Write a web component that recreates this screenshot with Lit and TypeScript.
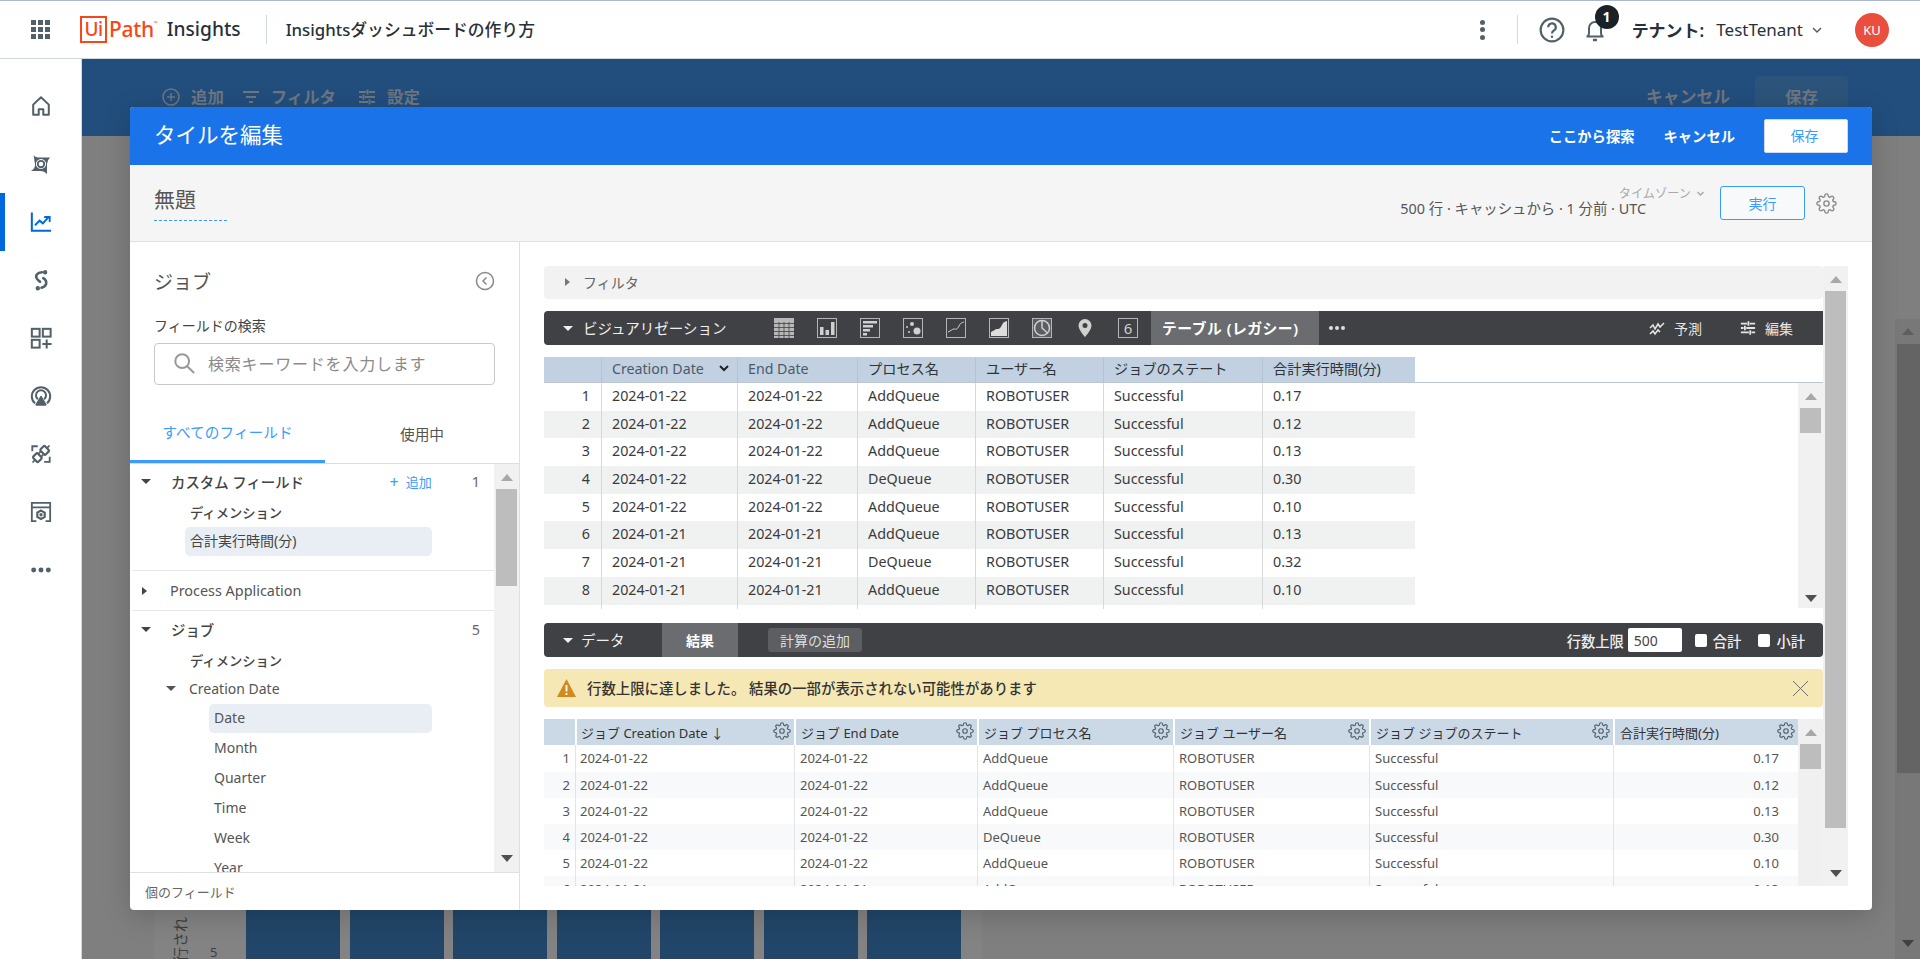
import { LitElement, html, svg, css } from "lit";
import { customElement } from "lit/decorators.js";

const GEAR = "M19.4 15a1.65 1.65 0 0 0 .33 1.82l.06.06a2 2 0 0 1 0 2.83 2 2 0 0 1-2.83 0l-.06-.06a1.65 1.65 0 0 0-1.82-.33 1.65 1.65 0 0 0-1 1.51V21a2 2 0 0 1-2 2 2 2 0 0 1-2-2v-.09A1.65 1.65 0 0 0 9 19.4a1.65 1.65 0 0 0-1.82.33l-.06.06a2 2 0 0 1-2.83 0 2 2 0 0 1 0-2.83l.06-.06a1.65 1.65 0 0 0 .33-1.82 1.65 1.65 0 0 0-1.51-1H3a2 2 0 0 1-2-2 2 2 0 0 1 2-2h.09A1.65 1.65 0 0 0 4.6 9a1.65 1.65 0 0 0-.33-1.82l-.06-.06a2 2 0 0 1 0-2.83 2 2 0 0 1 2.83 0l.06.06a1.65 1.65 0 0 0 1.82.33H9a1.65 1.65 0 0 0 1-1.51V3a2 2 0 0 1 2-2 2 2 0 0 1 2 2v.09a1.65 1.65 0 0 0 1 1.51 1.65 1.65 0 0 0 1.82-.33l.06-.06a2 2 0 0 1 2.83 0 2 2 0 0 1 0 2.83l-.06.06a1.65 1.65 0 0 0-.33 1.82V9a1.65 1.65 0 0 0 1.51 1H21a2 2 0 0 1 2 2 2 2 0 0 1-2 2h-.09a1.65 1.65 0 0 0-1.51 1z";

const gearIcon = (cls: string) => html`<svg class=${cls} viewBox="0 0 24 24" fill="none" stroke="currentColor" stroke-width="1.6"><circle cx="12" cy="12" r="3"></circle><path d=${GEAR}></path></svg>`;
const sliders = (cls: string) => html`<svg class=${cls} viewBox="0 0 18 18" fill="none" stroke="currentColor" stroke-width="2"><path d="M1 4h7M11 4h6M1 9h3M7 9h10M1 14h9M13 14h4M9.500 1.500v5M5.500 6.500v5M11.500 11.500v5"></path></svg>`;
const arrowDown = html`<i class="tri down"></i>`;
const arrowRight = html`<i class="tri right"></i>`;

const SIDE = [
  html`<svg viewBox="0 0 24 24" fill="none" stroke="currentColor" stroke-width="2.200"><path d="M3.500 21.500V10.500L12 2.500l8.500 8v11h-6v-6h-5v6z" stroke-linejoin="round"></path></svg>`,
  html`<svg viewBox="0 0 24 24"><path fill="currentColor" fill-rule="evenodd" d="M4 2.500Q6 5 9 5H22Q18.500 8 18.500 12V23Q15.500 19.500 12 19.500H1Q5.500 17 5.500 13ZM12 6.500a5.500 5.500 0 1 0 .01 0Z"></path><circle cx="12" cy="12" r="3.500" fill="none" stroke="currentColor" stroke-width="2"></circle></svg>`,
  html`<svg viewBox="0 0 24 24" fill="none" stroke="currentColor" stroke-width="2.200"><path d="M2 1.500V21.500H23"></path><path d="M5.500 15.500L10.500 10.500l3.500 3 6-6.500"></path><path d="M15.500 6.500h6v5.500" stroke-width="2"></path></svg>`,
  html`<svg viewBox="0 0 24 24" fill="none" stroke="currentColor" stroke-width="2.800" stroke-linecap="round"><path d="M13 3.500C8 3.500 5.500 7 7.500 10.500c1 1.500 2.500 2.500 3.500 3.500"></path><path d="M14.500 10c1.500 1 4 3 3 6.500C16.800 19 14.500 20 12.500 20.500"></path><circle cx="16.500" cy="3.500" r="1" fill="currentColor"></circle><circle cx="8.500" cy="21" r="1" fill="currentColor"></circle></svg>`,
  html`<svg viewBox="0 0 24 24" fill="none" stroke="currentColor" stroke-width="2.200"><rect x="2" y="2" width="8.500" height="8.500"></rect><rect x="14" y="2" width="8.500" height="8.500"></rect><rect x="2" y="14" width="8.500" height="8.500"></rect><path d="M18.200 13.500v10M13.500 18.500h10"></path></svg>`,
  html`<svg viewBox="0 0 24 24" fill="none" stroke="currentColor" stroke-width="2.200"><path d="M5.500 20a10 10 0 1 1 13 0"></path><path d="M8.500 15.500a5.500 5.500 0 1 1 7 0"></path><path d="M12 13l5 8.500H7z" fill="currentColor" stroke-linejoin="round"></path></svg>`,
  html`<svg viewBox="0 0 24 24" fill="none" stroke="currentColor" stroke-width="2"><path d="M2.500 9V3.500h6M21.500 15v5.500h-6"></path><g transform="rotate(45 8 16)"><rect x="4" y="12.500" width="8" height="7" rx="1.500" stroke-width="2.400"></rect><path d="M8 19.500v4M5.800 12.500V9.800M10.200 12.500V9.800" stroke-width="1.800"></path></g><g transform="rotate(45 16 8)"><rect x="12" y="4.500" width="8" height="7" rx="1.500" stroke-width="2.400"></rect><path d="M16 4.500V.5M13.800 11.500v2.700M18.200 11.500v2.700" stroke-width="1.800"></path></g></svg>`,
  html`<svg viewBox="0 0 24 24" fill="none" stroke="currentColor" stroke-width="2"><path d="M7 22H2V2h20v20h-5M2 7h20"></path><path d="M12 10.500l4 2.200v4.600l-4 2.200-4-2.200v-4.600z" stroke-width="2.400"></path><circle cx="12" cy="15" r=".8" fill="currentColor"></circle></svg>`,
  html`<svg viewBox="0 0 24 24" fill="currentColor"><circle cx="4" cy="12" r="2.700"></circle><circle cx="12" cy="12" r="2.700"></circle><circle cx="20" cy="12" r="2.700"></circle></svg>`,
];

const frame = svg`<rect x=".5" y=".5" width="19" height="19" fill="none" stroke="#b5b5b5"></rect>`;
const VIZ = [
  svg`<svg viewBox="0 0 20 20"><rect width="20" height="20" fill="#b8b8b8"></rect><path d="M0 5.500h20M0 9.500h20M0 13.500h20M0 17.500h20M5 4v16M10 4v16M15 4v16" stroke="#56575a" stroke-width="1"></path></svg>`,
  svg`<svg viewBox="0 0 20 20">${frame}<path d="M3 9h3.500v8H3zM8.500 12H12v5H8.500zM14 4h3.500v13H14z" fill="#d0d0d0"></path></svg>`,
  svg`<svg viewBox="0 0 20 20">${frame}<path d="M3 3h14v2.500H3zM3 7h10v2.500H3zM3 11h7v2.500H3zM3 15h4v2.500H3z" fill="#d0d0d0"></path></svg>`,
  svg`<svg viewBox="0 0 20 20">${frame}<g fill="#d0d0d0"><circle cx="14" cy="13" r="3.500"></circle><circle cx="9" cy="6" r="2"></circle><circle cx="4" cy="9" r="1"></circle><circle cx="6" cy="14" r="1"></circle></g></svg>`,
  svg`<svg viewBox="0 0 20 20">${frame}<path d="M2 14c3-1 4-3 6-3s3 1 5-3 3-3 5-4" fill="none" stroke="#d0d0d0"></path></svg>`,
  svg`<svg viewBox="0 0 20 20">${frame}<path d="M2 18v-4c3-1 4-3 6-3s3 0 5-4 3-3 5-4v15z" fill="#dcdcdc"></path></svg>`,
  svg`<svg viewBox="0 0 20 20"><rect x=".5" y=".5" width="19" height="19" fill="#5c5d60" stroke="#b5b5b5"></rect><circle cx="10" cy="10" r="7.500" fill="none" stroke="#d0d0d0" stroke-width="1.500"></circle><path d="M10 2.500V10l5.500 5" fill="none" stroke="#d0d0d0" stroke-width="1.500"></path></svg>`,
  svg`<svg viewBox="0 0 20 20"><path fill="#d0d0d0" fill-rule="evenodd" d="M10 1a6.500 6.500 0 0 0-6.500 6.500C3.500 12 10 19 10 19s6.500-7 6.500-11.500A6.500 6.500 0 0 0 10 1zm0 4a2.500 2.500 0 1 1 0 5 2.500 2.500 0 0 1 0-5z"></path></svg>`,
];

type Col = { t: string; w: number };
const COLS1: Col[] = [
  { t: "", w: 57 }, { t: "Creation Date", w: 136 }, { t: "End Date", w: 120 }, { t: "プロセス名", w: 118 },
  { t: "ユーザー名", w: 128 }, { t: "ジョブのステート", w: 159 }, { t: "合計実行時間(分)", w: 153 },
];
const COLS2: Col[] = [
  { t: "", w: 31 }, { t: "ジョブ Creation Date", w: 219 }, { t: "ジョブ End Date", w: 183 }, { t: "ジョブ プロセス名", w: 196 },
  { t: "ジョブ ユーザー名", w: 196 }, { t: "ジョブ ジョブのステート", w: 244 }, { t: "合計実行時間(分)", w: 185 },
];
const ROWS = [
  ["2024-01-22", "AddQueue", "0.17"], ["2024-01-22", "AddQueue", "0.12"], ["2024-01-22", "AddQueue", "0.13"],
  ["2024-01-22", "DeQueue", "0.30"], ["2024-01-22", "AddQueue", "0.10"], ["2024-01-21", "AddQueue", "0.13"],
  ["2024-01-21", "DeQueue", "0.32"], ["2024-01-21", "AddQueue", "0.10"], ["2024-01-21", "AddQueue", "0.11"],
];
const tracks = (c: Col[]) => c.map((x) => x.w + "px").join(" ");
const cells = (r: string[]) => [r[0], r[0], r[1], "ROBOTUSER", "Successful", r[2]];

const scrollbar = (cls: string, upTop: number, thumbTop: number, thumbH: number, dnBottom: number | null) => html`
  <div class="sb ${cls}">
    <i class="sb-up" style="margin-top:${upTop}px"></i>
    <i class="sb-thumb" style="margin-top:${thumbTop}px;height:${thumbH}px"></i>
    ${dnBottom === null ? "" : html`<i class="sb-dn" style="margin-bottom:${dnBottom}px"></i>`}
  </div>`;

@customElement("app-root")
export class AppRoot extends LitElement {
  static styles = css`
    :host { display: block; width: 1920px; height: 959px; position: relative; overflow: hidden;
      font-family: "Noto Sans", "Noto Sans CJK JP", sans-serif; font-size: 14px; color: #444; background: #fff; }
    * { box-sizing: border-box; }
    i { display: block; font-style: normal; }
    svg { display: block; flex: none; }

    .top { height: 59px; border-top: 1px solid #a9b8d0; border-bottom: 1px solid #cfd8dd; display: flex; align-items: center; background: #fff; padding: 0 31px; }
    .apps { width: 19px; height: 19px; display: grid; grid-template-columns: repeat(3, 5px); gap: 2px; margin-right: 30px; }
    .apps i { background: #526069; }
    .logo { display: flex; align-items: center; color: #fa4616; height: 27px; }
    .logo-box { width: 27px; height: 27px; border: 2.5px solid #fa4616; display: flex; align-items: center; justify-content: center; font-size: 19px; line-height: 1; letter-spacing: -.5px; font-weight: 500; }
    .logo-path { font-size: 21px; margin-left: 2px; line-height: 1; font-weight: 500; letter-spacing: -.3px; }
    .logo-tm { font-size: 5px; align-self: flex-start; margin-top: 4px; }
    .product { font-size: 19.200px; font-weight: 500; color: #273139; margin-left: 9px; padding-bottom: 2px; }
    .t-div { width: 1px; height: 29px; background: #cfd8dd; margin: 0 19px 0 25px; }
    .page-title { font-size: 16.800px; font-weight: 500; color: #273139; padding-bottom: 2px; }
    .top-right { margin-left: auto; display: flex; align-items: center; color: #526069; }
    .kebab { width: 6px; height: 20px; display: flex; flex-direction: column; justify-content: space-between; align-items: center; }
    .kebab i { width: 5px; height: 5px; border-radius: 50%; background: #526069; }
    .t-div2 { width: 1px; height: 29px; background: #d5dcdf; margin: 0 21px 0 31px; }
    .help { width: 26px; height: 26px; }
    .bell-wrap { position: relative; width: 24px; height: 24px; margin-left: 18px; }
    .bell { width: 24px; height: 24px; }
    .badge { position: absolute; left: 12px; top: -13px; width: 24px; height: 24px; border-radius: 50%; background: #1a2228; color: #fff; font-size: 14px; font-weight: 700; display: flex; align-items: center; justify-content: center; }
    .tenant-l { font-size: 17px; font-weight: 600; color: #273139; margin-left: 25px; }
    .tenant-v { font-size: 17px; color: #273139; margin-left: 12px; }
    .chev { width: 12px; height: 12px; margin-left: 8px; color: #526069; }
    .avatar { width: 34px; height: 34px; border-radius: 50%; background: #ea4f3d; color: #fff; font-size: 13px; display: flex; align-items: center; justify-content: center; margin-left: 32px; margin-right: 0; }

    .body { display: flex; height: 900px; }
    .side { width: 82px; border-right: 1px solid #cfd8dd; padding-top: 18px; background: #fff; flex: none; }
    .side-item { height: 58px; display: flex; align-items: center; justify-content: center; color: #526069; border-left: 5px solid transparent; padding-right: 4px; }
    .side-item svg { width: 22px; height: 22px; }
    .side-item.active { border-left-color: #0067df; color: #0067df; }

    .main { flex: 1; display: flex; flex-direction: column; background: #7f7f7f; min-width: 0; }
    .band { height: 77px; background: #224e7d; display: flex; align-items: center; padding: 0 72px 0 80px; color: #6e7680; font-size: 16.400px; font-weight: 600; flex: none; }
    .band svg { width: 18px; height: 18px; margin-bottom: 2px; }
    .band span { margin-left: 11px; padding-bottom: 4px; }
    .band .b2 { margin-left: 18px; }
    .band .b3 { margin-left: 22px; }
    .band .cancel { margin-left: auto; font-size: 16.800px; }
    .band .save { margin-left: 25px; width: 93px; height: 43px; border-radius: 4px; background: #2c5379; display: flex; align-items: center; justify-content: center; }
    .lower { flex: 1; display: flex; min-height: 0; }
    .canvas { flex: 1; display: flex; align-items: flex-end; padding-left: 72px; min-width: 0; overflow: hidden; }
    .tile { width: 828px; height: 90px; background: #838383; display: flex; align-items: flex-end; padding-left: 19px; color: #444; overflow: hidden; }
    .axis { writing-mode: vertical-rl; text-orientation: sideways; transform: rotate(180deg); font-size: 15px; line-height: 15px; margin-bottom: -3px; color: #3f3f3f; white-space: nowrap; }
    .tick { font-size: 13px; margin-left: 22px; line-height: 14px; color: #3f3f3f; }
    .bars { display: flex; gap: 9.500px; margin-left: 29px; }
    .bars i { width: 94px; height: 49px; background: #224669; }
    .sb.page-sb { width: 25px; margin-top: 183px; background: #787878; flex: none; }
    .page-sb .sb-up { border-bottom-color: #5e5e5e; }
    .page-sb .sb-thumb { background: #646464; width: 23px; margin-left: 2px; }
    .page-sb .sb-dn { border-top-color: #404040; }

    .sb { display: flex; flex-direction: column; align-items: center; flex: none; width: 25px; background: #f1f1f1; }
    .sb-up { width: 0; height: 0; border: 6px solid transparent; border-top: 0; border-bottom: 7px solid #a8a8a8; flex: none; }
    .sb-thumb { width: 21px; background: #bdbdbd; flex: none; }
    .sb-dn { width: 0; height: 0; border: 6px solid transparent; border-bottom: 0; border-top: 7px solid #505050; margin-top: auto; flex: none; }

    .modal { position: absolute; left: 130px; top: 107px; width: 1742px; height: 803px; background: #fff; border-radius: 4px; box-shadow: 0 6px 28px rgba(0,0,0,.18); display: flex; flex-direction: column; overflow: hidden; }
    .m-head { height: 58px; background: #1a73e8; color: #fff; display: flex; align-items: center; padding: 0 24px; flex: none; }
    .m-title { font-size: 21.500px; padding-bottom: 5px; }
    .m-link { font-weight: 600; font-size: 14.300px; padding-bottom: 2px; }
    .m-link.a { margin-left: auto; }
    .m-link.b { margin-left: 29px; }
    .m-save { margin-left: 29px; width: 84px; height: 34px; background: #fff; border: 1px solid #d0dcec; border-radius: 2px; color: #3b9bff; display: flex; align-items: center; justify-content: center; padding: 0 3px 2px 0; }
    .m-sub { height: 77px; background: #f5f5f5; border-bottom: 1px solid #e0e0e0; display: flex; align-items: center; padding: 0 35px 0 24px; flex: none; }
    .m-name { width: 73px; font-size: 21px; color: #555; line-height: 30px; border-bottom: 1px dashed #3b9bff; padding-bottom: 6px; margin-top: -2px; }
    .m-info { margin-left: auto; display: flex; flex-direction: column; align-items: flex-end; line-height: 15px; margin-top: -5px; }
    .tz { color: #aaa; display: flex; align-items: center; gap: 5px; font-size: 12.200px; }
    .tz svg { width: 9px; height: 9px; }
    .stat { color: #555; margin-right: 59px; font-size: 14.400px; }
    .run { width: 85px; height: 34px; margin-left: 15px; border: 1px solid #3b9bff; border-radius: 3px; color: #3b9bff; display: flex; align-items: center; justify-content: center; background: #f8f9fb; }
    .m-gear { width: 21px; height: 21px; margin-left: 11px; color: #8a8a8a; }
    .m-body { flex: 1; display: flex; min-height: 0; }

    .lp { width: 390px; border-right: 1px solid #e0e0e0; display: flex; flex-direction: column; flex: none; min-height: 0; }
    .lp-head { padding: 25px 24px 0; display: flex; flex-direction: column; flex: none; }
    .lp-title { display: flex; align-items: center; justify-content: space-between; height: 28px; font-size: 19px; color: #555; }
    .lp-title svg { width: 20px; height: 20px; color: #888; }
    .lp-label { margin-top: 21px; line-height: 20px; font-size: 14px; color: #444; }
    .search { margin-top: 7px; height: 42px; border: 1px solid #c8c8c8; border-radius: 4px; display: flex; align-items: center; padding-left: 18px; padding-bottom: 2px; color: #8a8a8a; font-size: 16px; letter-spacing: .8px; }
    .search svg { width: 22px; height: 22px; margin-right: 13px; color: #999; }
    .tabs { display: grid; grid-template-columns: 195px 194px; height: 61px; margin-top: 18px; border-bottom: 1px solid #ddd; flex: none; }
    .tab { display: flex; align-items: center; justify-content: center; padding-top: 0; color: #555; height: 60px; font-size: 14.700px; }
    .tab.on { color: #3b9bff; border-bottom: 3px solid #3b9bff; }
    .tree { flex: 1; display: flex; min-height: 0; }
    .tree-c { flex: 1; overflow: hidden; min-width: 0; color: #555; }
    .tree-head { display: flex; align-items: center; padding-left: 41px; position: relative; font-size: 14.400px; }
    .tree-head .tri { margin-left: -30px; margin-right: 20px; }
    .tree-head .cnt { margin-left: auto; margin-right: 14px; color: #666; font-weight: 400; }
    .tree-head .add { margin-left: auto; color: #3b9bff; display: flex; align-items: center; gap: 7px; font-size: 13px; font-weight: 400; }
    .tree-head .add b { font-size: 16px; font-weight: 400; line-height: 1; }
    .tree-head .add + .cnt { margin-left: 40px; }
    .h36 { height: 36px; color: #444; font-weight: 500; }
    .h35 { height: 35px; color: #444; font-weight: 500; }
    .h39 { height: 39px; }
    .dim { height: 28px; line-height: 28px; padding-left: 60px; font-size: 13.300px; color: #444; font-weight: 500; }
    .pill { height: 29px; line-height: 27px; width: 247px; margin-left: 55px; padding-left: 5px; background: #e9eef5; border-radius: 5px; color: #444; }
    .divider { height: 1px; background: #e6e6e6; margin: 14px 0 0 2px; }
    .divider.flush { margin-top: 0; }
    .cd { display: flex; align-items: center; height: 26px; padding-left: 36px; }
    .cd .tri { margin-right: 13px; }
    .leafs { display: flex; flex-direction: column; gap: 1px; margin-top: 3px; }
    .leaf { height: 29px; line-height: 27px; width: 223px; margin-left: 79px; padding-left: 5px; border-radius: 5px; }
    .leaf.on { background: #e9eef5; }
    .tri { width: 0; height: 0; flex: none; }
    .tri.down { border: 5px solid transparent; border-bottom: 0; border-top: 5px solid currentColor; }
    .tri.right { border: 4.500px solid transparent; border-right: 0; border-left: 5px solid currentColor; }
    .tree-head .tri.right { margin-left: -29px; margin-right: 23px; color: #444; }
    .tree-head .tri.down { color: #444; }
    .lp-foot { height: 38px; border-top: 1px solid #e0e0e0; display: flex; align-items: center; padding-left: 15px; font-size: 13px; color: #666; flex: none; }

    .rp { flex: 1; padding: 24px 24px 24px 24px; display: flex; min-width: 0; }
    .rp-c { flex: 1; display: flex; flex-direction: column; min-width: 0; }
    .rp-sb { height: 620px; }
    .filter { height: 33px; background: #f2f2f2; border-radius: 4px; display: flex; align-items: center; padding-left: 21px; padding-bottom: 1px; gap: 13px; color: #666; flex: none; }
    .filter .tri { color: #777; }
    .bar { height: 34px; background: #404144; color: #fff; display: flex; align-items: center; flex: none; }
    .viz { margin-top: 12px; border-radius: 4px 0 0 4px; }
    .bar-t { display: flex; align-items: center; padding-left: 19px; gap: 10px; color: #f0f0f0; }
    .bar-t span { padding-bottom: 2px; }
    .viz .bar-t { width: 230px; font-size: 14.500px; }
    .viz-icons { display: flex; gap: 23px; color: #ccc; }
    .viz-icons svg { width: 20px; height: 20px; }
    .viz-six { width: 20px; height: 20px; border: 1px solid #b5b5b5; display: flex; align-items: center; justify-content: center; font-size: 15px; color: #d0d0d0; line-height: 1; }
    .viz-tab { margin-left: 13px; width: 168px; height: 34px; background: #6b6c6f; display: flex; align-items: center; padding-left: 11px; padding-bottom: 1px; font-weight: 600; font-size: 14.800px; letter-spacing: .5px; }
    .viz-dots { margin-left: 10px; display: flex; gap: 2px; }
    .viz-dots i { width: 4px; height: 4px; border-radius: 50%; background: #ddd; }
    .viz-r { margin-left: auto; display: flex; align-items: center; padding-right: 30px; color: #e6e6e6; }
    .viz-r svg { width: 16px; height: 16px; margin-right: 9px; }
    .viz-r .gap { margin-left: 38px; }

    .t1 { margin-top: 12px; height: 252px; display: flex; flex-direction: column; flex: none; }
    .t1-head { display: grid; height: 26px; background: linear-gradient(#c1d1e1, #c1d1e1) no-repeat 0 0 / 871px 25px; border-bottom: 1px solid #bcc6d0; flex: none; }
    .hc { display: flex; align-items: center; padding-left: 10px; position: relative; color: #2f3338; white-space: nowrap; }
    .t1-head .hc { font-size: 14.200px; height: 25px; padding-bottom: 3px; }
    .hc + .hc { border-left: 1px solid #b4c4d4; }
    .hc.muted { color: #4c5a68; }
    .hc .sort { margin-left: 14px; width: 12px; height: 12px; color: #222; }
    .t1-body { flex: 1; display: flex; min-height: 0; }
    .t1-rows { flex: 1; overflow: hidden; min-width: 0; }
    .r1 { display: grid; height: 27.700px; background: #fff; width: 871px; font-size: 14.300px; }
    .r1.alt { background: #f0f2f1; }
    .c { display: flex; align-items: center; padding-left: 10px; padding-bottom: 1px; color: #3b3b3b; white-space: nowrap; border-left: 1px solid #d8d8d8; }
    .r1 .c { padding-bottom: 3px; }
    .r1 .c.n { border-left: 0; justify-content: flex-end; padding: 0 11px 3px 0; }
    .sb-in { height: 225px; }

    .data { margin-top: 14px; border-radius: 4px 4px 4px 4px; }
    .data .bar-t { width: 118px; gap: 8px; padding-left: 19px; font-size: 14.500px; }
    .data-tab { width: 76px; height: 34px; background: #6b6c6f; display: flex; align-items: center; justify-content: center; font-weight: 700; }
    .calc { margin-left: 30px; width: 94px; height: 24px; background: #5d5e61; border-radius: 3px; display: flex; align-items: center; justify-content: center; color: #ddd; }
    .data-r { margin-left: auto; display: flex; align-items: center; padding-right: 18px; color: #eee; font-weight: 500; font-size: 14.300px; }
    .limit { width: 54px; height: 24px; background: #fff; border-radius: 2px; color: #444; margin-left: 4px; padding-left: 6px; display: flex; align-items: center; font-weight: 400; font-size: 14px; }
    .chk { width: 12px; height: 13px; background: #fff; border-radius: 2px; margin: 0 6px 0 13px; }
    .chk.f { margin-left: 13px; }
    .chk.s { margin-left: 17px; }

    .warn { margin-top: 12px; height: 38px; background: #f5e8b5; border-radius: 4px; display: flex; align-items: center; padding: 0 14px 0 13px; color: #333; flex: none; }
    .warn .w-ic { width: 19px; height: 18px; margin-right: 11px; }
    .warn .x { margin-left: auto; width: 17px; height: 17px; color: #6f6f6f; }
    .warn span { font-weight: 500; font-size: 14.400px; padding-bottom: 2px; }

    .t2 { margin-top: 12px; height: 167px; display: flex; flex: none; overflow: hidden; }
    .t2-c { width: 1254px; flex: none; overflow: hidden; }
    .t2-head { display: grid; height: 26px; background: #cbd8e5; }
    .t2-head .hc { font-size: 13px; padding-left: 5px; border-left: 2px solid #fff; }
    .t2-head .hc:first-child { border-left: 0; }
    .t2-head .hc:nth-child(2) { padding-left: 4px; }
    .t2-head .hc svg { position: absolute; right: 3px; top: 3px; width: 18px; height: 18px; color: #55636f; }
    .r2 { display: grid; height: 26px; background: #fff; font-size: 13px; }
    .r2.alt { background: #f8f9fb; }
    .r2.first { height: 27px; }
    .r2 .c { padding-left: 5px; color: #555; border-left: 1px solid #e2e4ea; }
    .r2 .c:nth-child(2) { padding-left: 4px; }
    .r2 .c.n { border-left: 0; justify-content: flex-end; padding: 0 5px 1px 0; }
    .r2 .c.num { justify-content: flex-end; padding: 0 19px 1px 0; }
    .sb-t2 { height: 167px; background: #f0f0f0; }
  `;

  render() {
    return html`
      <div class="top">
        <div class="apps">${Array.from({ length: 9 }, () => html`<i></i>`)}</div>
        <div class="logo"><div class="logo-box">Ui</div><div class="logo-path">Path</div><span class="logo-tm">™</span></div>
        <div class="product">Insights</div>
        <div class="t-div"></div>
        <div class="page-title">Insightsダッシュボードの作り方</div>
        <div class="top-right">
          <div class="kebab"><i></i><i></i><i></i></div>
          <div class="t-div2"></div>
          <svg class="help" viewBox="0 0 24 24" fill="none" stroke="currentColor" stroke-width="2"><circle cx="12" cy="12" r="10.500"></circle><path d="M8.500 9.500a3.500 3.500 0 1 1 5.200 3c-1.200.7-1.700 1.400-1.700 2.800"></path><circle cx="12" cy="18.200" r="1.100" fill="currentColor" stroke="none"></circle></svg>
          <div class="bell-wrap">
            <svg class="bell" viewBox="0 0 24 24" fill="none" stroke="currentColor" stroke-width="2"><path d="M3.500 18.500c2 0 2.500-2 2.500-4V10a6 6 0 0 1 12 0v4.500c0 2 .5 4 2.500 4z"></path><path d="M10 22h4" stroke-width="2.500"></path></svg>
            <div class="badge">1</div>
          </div>
          <div class="tenant-l">テナント:</div>
          <div class="tenant-v">TestTenant</div>
          <svg class="chev" viewBox="0 0 12 12" fill="none" stroke="currentColor" stroke-width="1.500"><path d="M2 4l4 4 4-4"></path></svg>
          <div class="avatar">KU</div>
        </div>
      </div>

      <div class="body">
        <nav class="side">
          ${SIDE.map((ic, i) => html`<div class="side-item ${i === 2 ? "active" : ""}">${ic}</div>`)}
        </nav>
        <div class="main">
          <div class="band">
            <svg viewBox="0 0 18 18" fill="none" stroke="currentColor" stroke-width="1.500"><circle cx="9" cy="9" r="8"></circle><path d="M9 5v8M5 9h8"></path></svg>
            <span>追加</span>
            <svg class="b2" viewBox="0 0 18 18" fill="none" stroke="currentColor" stroke-width="2"><path d="M1 4h16M4 9h10M7 14h4"></path></svg>
            <span>フィルタ</span>
            ${sliders("b3")}
            <span>設定</span>
            <span class="cancel">キャンセル</span>
            <span class="save">保存</span>
          </div>
          <div class="lower">
            <div class="canvas">
              <div class="tile">
                <div class="axis">行され</div>
                <div class="tick">5</div>
                <div class="bars">${Array.from({ length: 7 }, () => html`<i></i>`)}</div>
              </div>
            </div>
            ${scrollbar("page-sb", 9, 9, 429, 12)}
          </div>
        </div>
      </div>

      <section class="modal">
        <header class="m-head">
          <div class="m-title">タイルを編集</div>
          <div class="m-link a">ここから探索</div>
          <div class="m-link b">キャンセル</div>
          <div class="m-save">保存</div>
        </header>
        <div class="m-sub">
          <div class="m-name">無題</div>
          <div class="m-info">
            <div class="tz">タイムゾーン<svg viewBox="0 0 12 12" fill="none" stroke="currentColor" stroke-width="2"><path d="M2 4l4 4 4-4"></path></svg></div>
            <div class="stat">500 行 · キャッシュから · 1 分前 · UTC</div>
          </div>
          <div class="run">実行</div>
          ${gearIcon("m-gear")}
        </div>
        <div class="m-body">
          <aside class="lp">
            <div class="lp-head">
              <div class="lp-title">ジョブ<svg viewBox="0 0 20 20" fill="none" stroke="currentColor" stroke-width="1.500"><circle cx="10" cy="10" r="8.500"></circle><path d="M11.500 6.500L8 10l3.500 3.500"></path></svg></div>
              <div class="lp-label">フィールドの検索</div>
              <div class="search"><svg viewBox="0 0 24 24" fill="none" stroke="currentColor" stroke-width="2.200"><circle cx="10" cy="10" r="7.500"></circle><path d="M15.500 15.500L23 23"></path></svg>検索キーワードを入力します</div>
            </div>
            <div class="tabs"><div class="tab on">すべてのフィールド</div><div class="tab">使用中</div></div>
            <div class="tree">
              <div class="tree-c">
                <div class="tree-head h35">${arrowDown}カスタム フィールド<span class="add"><b>+</b><span>追加</span></span><span class="cnt">1</span></div>
                <div class="dim">ディメンション</div>
                <div class="pill">合計実行時間(分)</div>
                <div class="divider"></div>
                <div class="tree-head h39">${arrowRight}Process Application</div>
                <div class="divider flush"></div>
                <div class="tree-head h36">${arrowDown}ジョブ<span class="cnt">5</span></div>
                <div class="dim">ディメンション</div>
                <div class="cd">${arrowDown}Creation Date</div>
                <div class="leafs">
                  ${["Date", "Month", "Quarter", "Time", "Week", "Year"].map((l, i) => html`<div class="leaf ${i === 0 ? "on" : ""}">${l}</div>`)}
                </div>
              </div>
              ${scrollbar("", 10, 8, 97, 10)}
            </div>
            <div class="lp-foot">個のフィールド</div>
          </aside>
          <div class="rp">
            <div class="rp-c">
              <div class="filter">${arrowRight}<span>フィルタ</span></div>
              <div class="bar viz">
                <div class="bar-t">${arrowDown}<span>ビジュアリゼーション</span></div>
                <div class="viz-icons">${VIZ}<div class="viz-six">6</div></div>
                <div class="viz-tab">テーブル (レガシー)</div>
                <div class="viz-dots"><i></i><i></i><i></i></div>
                <div class="viz-r">
                  <svg viewBox="0 0 16 16" fill="none" stroke="currentColor" stroke-width="1.500"><path d="M1 8l3-3 2 4 3-5 2 3 4-4M1 14l3-3 2 3 3-4 2 2"></path></svg><span>予測</span>
                  ${sliders("gap")}<span>編集</span>
                </div>
              </div>
              <div class="t1">
                <div class="t1-head" style="grid-template-columns:${tracks(COLS1)}">
                  ${COLS1.map((c, i) => html`<div class="hc ${i === 1 || i === 2 ? "muted" : ""}">${c.t}${i === 1 ? html`<svg class="sort" viewBox="0 0 12 12" fill="none" stroke="currentColor" stroke-width="2"><path d="M2 4l4 4 4-4"></path></svg>` : ""}</div>`)}
                </div>
                <div class="t1-body">
                  <div class="t1-rows">
                    ${ROWS.map((r, i) => html`<div class="r1 ${i % 2 ? "alt" : ""}" style="grid-template-columns:${tracks(COLS1)}"><div class="c n">${i + 1}</div>${cells(r).map((v) => html`<div class="c">${v}</div>`)}</div>`)}
                  </div>
                  ${scrollbar("sb-in", 10, 8, 25, 6)}
                </div>
              </div>
              <div class="bar data">
                <div class="bar-t">${arrowDown}<span>データ</span></div>
                <div class="data-tab">結果</div>
                <div class="calc">計算の追加</div>
                <div class="data-r">行数上限<div class="limit">500</div><i class="chk f"></i>合計<i class="chk s"></i>小計</div>
              </div>
              <div class="warn">
                <svg class="w-ic" viewBox="0 0 19 18"><path d="M9.500 0L19 18H0z" fill="#d08a1e"></path><path d="M8.600 6h1.800v6.500H8.600zM8.600 14h1.800v2H8.600z" fill="#fff"></path></svg>
                <span>行数上限に達しました。 結果の一部が表示されない可能性があります</span>
                <svg class="x" viewBox="0 0 17 17" fill="none" stroke="currentColor" stroke-width="1"><path d="M1 1l15 15M16 1L1 16"></path></svg>
              </div>
              <div class="t2">
                <div class="t2-c">
                  <div class="t2-head" style="grid-template-columns:${tracks(COLS2)}">
                    ${COLS2.map((c, i) => html`<div class="hc">${c.t}${i === 1 ? " ↓" : ""}${i ? gearIcon("") : ""}</div>`)}
                  </div>
                  ${ROWS.slice(0, 6).map((r, i) => html`<div class="r2 ${i % 2 ? "alt" : ""} ${i === 0 ? "first" : ""}" style="grid-template-columns:${tracks(COLS2)}"><div class="c n">${i + 1}</div>${cells(r).map((v, j) => html`<div class="c ${j === 5 ? "num" : ""}">${v}</div>`)}</div>`)}
                </div>
                ${scrollbar("sb-t2", 10, 8, 25, null)}
              </div>
            </div>
            ${scrollbar("rp-sb", 10, 8, 537, 9)}
          </div>
        </div>
      </section>
    `;
  }
}
